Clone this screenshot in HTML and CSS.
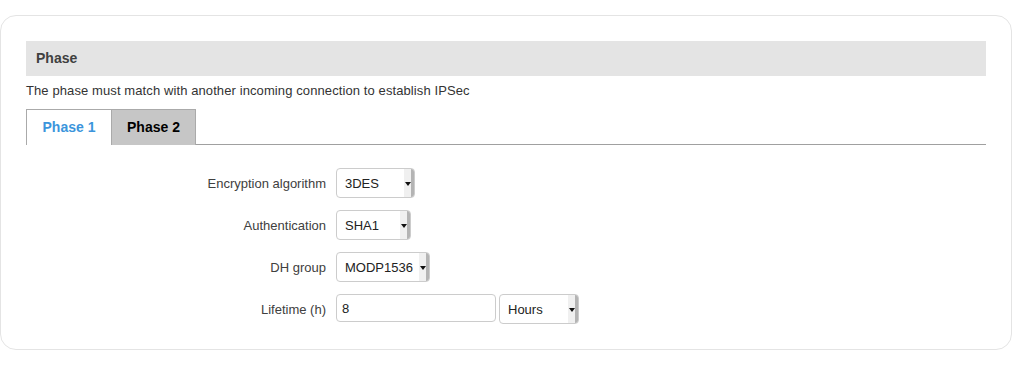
FILE: index.html
```html
<!DOCTYPE html>
<html lang="en">
<head>
    <meta charset="UTF-8">
    <title>IPSec Phase</title>
    <link rel="stylesheet" href="styles.css">
</head>
<body>

    <div class="panel">
        <h3 class="panel-title">Phase</h3>
        <p class="panel-desc">The phase must match with another incoming connection to establish IPSec</p>

        <ul class="tabs">
            <li class="tab active">Phase 1</li>
            <li class="tab">Phase 2</li>
        </ul>

        <div class="form">
            <div class="row">
                <label class="label">Encryption algorithm</label>
                <div class="select w-enc"><span>3DES</span><i class="arrow"></i></div>
            </div>
            <div class="row">
                <label class="label">Authentication</label>
                <div class="select w-auth"><span>SHA1</span><i class="arrow"></i></div>
            </div>
            <div class="row">
                <label class="label">DH group</label>
                <div class="select w-dh"><span>MODP1536</span><i class="arrow"></i></div>
            </div>
            <div class="row">
                <label class="label">Lifetime (h)</label>
                <input class="text-input" type="text" value="8">
                <div class="select w-unit"><span>Hours</span><i class="arrow"></i></div>
            </div>
        </div>
    </div>

</body>
</html>
```

FILE: styles.css
```css
* {
    margin: 0;
    padding: 0;
    box-sizing: border-box;
}

body {
    font-family: "Liberation Sans", Arial, sans-serif;
    font-size: 13px;
    color: #404040;
    background: #fff;
}

.panel {
    margin-top: 15px;
    width: 1012px;
    border: 1px solid #e4e4e4;
    border-radius: 16px;
    padding: 25px;
}

.panel-title {
    background: #e4e4e4;
    height: 35px;
    line-height: 35px;
    padding-left: 10px;
    font-size: 14px;
    font-weight: bold;
    color: #404040;
}

.panel-desc {
    margin-top: 7px;
    line-height: 15px;
    color: #333;
    letter-spacing: 0.1px;
}

/* Tabs */
.tabs {
    list-style: none;
    display: flex;
    margin-top: 11px;
    border-bottom: 1px solid #a0a0a0;
}

.tab {
    width: 85px;
    height: 36px;
    line-height: 34px;
    text-align: center;
    font-size: 14px;
    font-weight: bold;
    color: #000;
    background: #c6c6c6;
    border: 1px solid #aaa;
    border-bottom: none;
    margin-bottom: -1px;
}

.tab.active {
    background: #fff;
    color: #3b95dc;
    border-right: none;
}

/* Form */
.form {
    padding-top: 23px;
    display: flex;
    flex-direction: column;
    gap: 12px;
}

.row {
    display: flex;
    align-items: center;
    height: 30px;
}

.label {
    width: 310px;
    text-align: right;
    padding-right: 10px;
    color: #404040;
}

.select {
    position: relative;
    height: 30px;
    border: 1px solid #ccc;
    border-radius: 4px;
    display: flex;
    align-items: center;
    padding-left: 8px;
    color: #222;
    background: #fff;
}

.select .arrow {
    position: absolute;
    right: 0;
    top: 0;
    bottom: 0;
    width: 10px;
    border-radius: 0 3px 3px 0;
    background: linear-gradient(to right, #f0f0f0 0, #f0f0f0 7px, #b4b4b4 7px);
}

.select .arrow::after {
    content: "";
    position: absolute;
    left: 1px;
    top: 13px;
    border-left: 3px solid transparent;
    border-right: 3px solid transparent;
    border-top: 4px solid #111;
}

.w-enc { width: 79px; }
.w-auth { width: 75px; }
.w-dh { width: 94px; }
.w-unit { width: 80px; margin-left: 3px; }

.text-input {
    width: 160px;
    height: 28px;
    border: 1px solid #ccc;
    border-radius: 4px;
    padding-left: 5px;
    font-family: inherit;
    font-size: 13px;
    color: #222;
    margin-top: -2px;
}
```
